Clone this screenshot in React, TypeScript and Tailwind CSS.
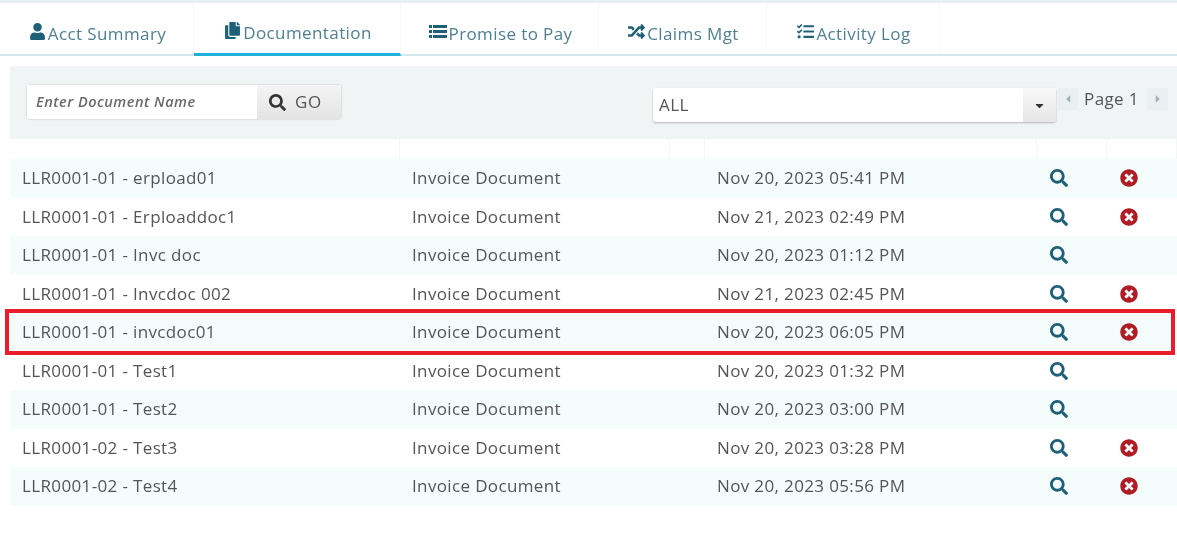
import React from "react";
import { FaUser, FaCopy, FaRandom, FaTasks, FaSearch, FaTimesCircle, FaCaretDown, FaCaretLeft, FaCaretRight } from "react-icons/fa";

function ListIcon({ className }: { className?: string }) {
  return (
    <svg viewBox="0 0 18 13" width="18" height="13" fill="currentColor" className={className}>
      <rect x="0" y="0" width="3" height="3" />
      <rect x="4" y="0" width="14" height="3" />
      <rect x="0" y="5" width="3" height="3" />
      <rect x="4" y="5" width="14" height="3" />
      <rect x="0" y="10" width="3" height="3" />
      <rect x="4" y="10" width="14" height="3" />
    </svg>
  );
}

const tabs = [
  { label: "Acct Summary", Icon: FaUser, w: "w-[194px]", active: false },
  { label: "Documentation", Icon: FaCopy, w: "w-[207px]", active: true },
  { label: "Promise to Pay", Icon: ListIcon, w: "w-[198px]", active: false },
  { label: "Claims Mgt", Icon: FaRandom, w: "w-[168px]", active: false },
  { label: "Activity Log", Icon: FaTasks, w: "w-[173px]", active: false },
];

const rows = [
  ["LLR0001-01 - erpload01", "Nov 20, 2023 05:41 PM", true],
  ["LLR0001-01 - Erploaddoc1", "Nov 21, 2023 02:49 PM", true],
  ["LLR0001-01 - Invc doc", "Nov 20, 2023 01:12 PM", false],
  ["LLR0001-01 - Invcdoc 002", "Nov 21, 2023 02:45 PM", true],
  ["LLR0001-01 - invcdoc01", "Nov 20, 2023 06:05 PM", true],
  ["LLR0001-01 - Test1", "Nov 20, 2023 01:32 PM", false],
  ["LLR0001-01 - Test2", "Nov 20, 2023 03:00 PM", false],
  ["LLR0001-02 - Test3", "Nov 20, 2023 03:28 PM", true],
  ["LLR0001-02 - Test4", "Nov 20, 2023 05:56 PM", true],
] as const;

const grid = "grid grid-cols-[390px_270px_35px_332px_70px_70px]";

export default function App() {
  return (
    <div className="relative h-[542px] w-[1177px] overflow-hidden bg-white font-['Open_Sans',sans-serif] blur-[0.4px]">
      <div className="h-[3px] bg-[#e6f0f0]" />
      <nav className="flex h-[53px] border-b-2 border-[#d3e6ec]">
        {tabs.map(({ label, Icon, w, active }) => (
          <div
            key={label}
            className={`flex ${w} items-center justify-center border-r border-[#f6f8f8] pt-[9px] pl-[2px] text-[17px] leading-none tracking-[0.4px] text-[#4f7f90] ${
              active ? "mb-[-2px] border-b-[3px] border-b-[#1db0d8]" : ""
            }`}
          >
            <Icon className="mr-[2px] mb-[4px] text-[17px] text-[#1f6078]" />
            <span>{label}</span>
          </div>
        ))}
      </nav>

      <main className="mt-[10px] ml-[10px] w-[1167px]">
        <div className="flex h-[73px] bg-[#f0f4f5]">
          <div className="mt-[19px] ml-[17px] flex h-[34px] w-[314px] rounded-[2px] shadow-[0_0_2px_rgba(0,0,0,0.25)]">
            <div className="flex w-[230px] items-center bg-white pl-[9px] text-[14.5px] font-semibold tracking-[0.5px] text-[#6a6a6a] italic">
              Enter Document Name
            </div>
            <div className="flex flex-1 items-center justify-center gap-[9px] bg-gradient-to-b from-[#f5f5f5] to-[#e4e4e4] pr-[7px] text-[17px] tracking-[0.8px] text-[#555]">
              <FaSearch className="text-[17px] text-[#333]" />
              GO
            </div>
          </div>
          <div className="mt-[22px] ml-[312px] flex h-[34px] w-[403px] rounded-[3px] bg-white shadow-[0_1px_2px_rgba(0,0,0,0.25)]">
            <div className="flex flex-1 items-center pl-[6px] text-[17px] tracking-[0.4px] text-[#555]">ALL</div>
            <div className="flex w-[33px] items-center justify-center rounded-r-[3px] bg-gradient-to-b from-[#f8f8f8] to-[#e6e6e6]">
              <FaCaretDown className="text-[13px] text-[#333]" />
            </div>
          </div>
          <div className="mt-[22px] ml-[2px] flex h-[22px] items-center">
            <div className="flex h-[22px] w-[20px] items-center justify-center bg-[#eaf0f2]">
              <FaCaretLeft className="text-[12px] text-[#9db4bd]" />
            </div>
            <span className="mr-[8px] ml-[6px] text-[17px] tracking-[0.4px] text-[#555]">Page 1</span>
            <div className="flex h-[22px] w-[21px] items-center justify-center bg-[#eaf0f2]">
              <FaCaretRight className="text-[12px] text-[#9db4bd]" />
            </div>
          </div>
        </div>

        <div className={`${grid} h-[20px]`}>
          {[0, 1, 2, 3, 4, 5].map((i) => (
            <div key={i} className="border-r border-[#f4f7f7]" />
          ))}
        </div>

        {rows.map(([name, date, del], i) => (
          <div
            key={name}
            className={`${grid} h-[38.5px] items-center text-[17px] tracking-[0.36px] text-[#555] ${i % 2 === 0 ? "bg-[#f5fcfc]" : "bg-white"}`}
          >
            <div className="pb-[1px] pl-[12px]">{name}</div>
            <div className="pb-[1px] pl-[12px]">Invoice Document</div>
            <div />
            <div className="pb-[1px] pl-[12px]">{date}</div>
            <div className="pl-[13px]">
              <FaSearch className="text-[18px] text-[#1f6078]" />
            </div>
            <div className="pl-[13px]">
              {del && <FaTimesCircle className="text-[18px] text-[#b01c24]" />}
            </div>
          </div>
        ))}
      </main>

      <div className="absolute top-[309px] left-[5px] h-[46px] w-[1170px] border-[4px] border-[#ea1c2c]" />
    </div>
  );
}
